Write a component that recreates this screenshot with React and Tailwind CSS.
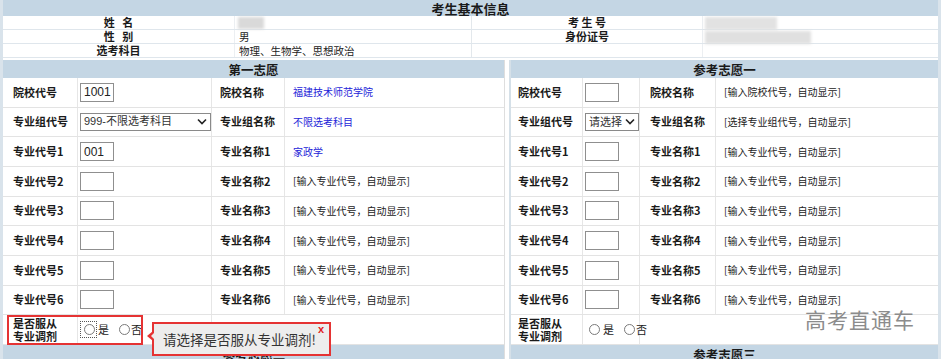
import React from "react";

const FONT = "font-['SimSun','Noto_Sans_CJK_SC',sans-serif]";

function Chevron() {
  return (
    <svg width="10" height="7" viewBox="0 0 10 7" className="shrink-0">
      <polyline points="1,1.5 5,5.5 9,1.5" fill="none" stroke="#222" strokeWidth="1.6" />
    </svg>
  );
}

function TextInput({ value }) {
  return (
    <div className="w-[34px] h-[19px] border border-[#8f8f8f] bg-white flex items-center pl-[3px] text-[12px] leading-[14px] text-[#222] font-['Liberation_Sans',sans-serif]">
      {value}
    </div>
  );
}

function Radios({ focus }) {
  return (
    <div className="flex items-center text-[11px] leading-[13px] text-[#222]">
      <div className={`flex items-center h-[17px] pl-[3px] pr-[1px] ${focus ? "border border-dotted border-[#555]" : "border border-transparent"}`}>
        <span className="w-[11px] h-[11px] rounded-full border border-[#7a7a7a] bg-white" />
      </div>
      <span className="ml-[1px]">是</span>
      <span className="ml-[10px] w-[11px] h-[11px] rounded-full border border-[#7a7a7a] bg-white" />
      <span className="ml-[1px]">否</span>
    </div>
  );
}

function PanelRow({ cols, pads, label, input, label2, value, blue }) {
  return (
    <div className="flex h-[29.67px] border-b border-[#e3e3e3]">
      <div className={`${cols[0]} ${pads[0]} border-r border-[#e6e6e6] flex items-center text-[11px] font-bold text-[#1a1a1a] leading-[13px]`}>
        {label}
      </div>
      <div className={`${cols[1]} ${pads[1]} border-r border-[#e6e6e6] flex items-center`}>{input}</div>
      {label2 !== undefined ? (
        <>
          <div className={`${cols[2]} ${pads[2]} border-r border-[#e6e6e6] flex items-center text-[11px] leading-[13px] font-bold text-[#1a1a1a]`}>
            {label2}
          </div>
          <div className={`flex-1 pl-[8px] flex items-center text-[10px] leading-[12px] ${blue ? "text-[#2424d8]" : "text-[#222]"}`}>
            {value}
          </div>
        </>
      ) : (
        <div className="flex-1" />
      )}
    </div>
  );
}

function Panel({ title, cols, pads, rows, radioFocus, className }) {
  return (
    <div className={className}>
      <div className="h-[18px] bg-[#c4d6e4] flex items-center justify-center text-[12.5px] leading-[15px] font-bold text-[#1a1a1a]">
        {title}
      </div>
      {rows.map((r, i) => (
        <PanelRow key={i} cols={cols} pads={pads} {...r} />
      ))}
      <PanelRow
        cols={cols}
        pads={pads}
        label={
          <div className="flex flex-col leading-[13px]">
            <span>是否服从</span>
            <span>专业调剂</span>
          </div>
        }
        input={<Radios focus={radioFocus} />}
      />
      <div className="h-[18px] bg-[#c4d6e4]" />
    </div>
  );
}

function SelectBox({ wide, text }) {
  return (
    <div
      className={`${wide ? "w-[131px]" : "w-[56px]"} h-[18px] border border-[#8a8a8a] bg-white flex items-center justify-between pl-[3px] pr-[3px] text-[11px] leading-[13px] text-[#333]`}
    >
      <span className={wide ? "font-['Liberation_Sans','Noto_Sans_CJK_SC',sans-serif]" : ""}>{text}</span>
      <Chevron />
    </div>
  );
}

function buildRows(left) {
  const auto = "[输入专业代号，自动显示]";
  const rows = [
    {
      label: "院校代号",
      input: <TextInput value={left ? "1001" : ""} />,
      label2: "院校名称",
      value: left ? "福建技术师范学院" : "[输入院校代号，自动显示]",
      blue: left,
    },
    {
      label: "专业组代号",
      input: <SelectBox wide={left} text={left ? "999-不限选考科目" : "请选择"} />,
      label2: "专业组名称",
      value: left ? "不限选考科目" : "[选择专业组代号，自动显示]",
      blue: left,
    },
  ];
  for (let i = 1; i <= 6; i++) {
    rows.push({
      label: `专业代号${i}`,
      input: <TextInput value={left && i === 1 ? "001" : ""} />,
      label2: `专业名称${i}`,
      value: left && i === 1 ? "家政学" : auto,
      blue: left && i === 1,
    });
  }
  return rows;
}

function Blur({ className }) {
  return <div className={`absolute blur-[1.5px] ${className}`} />;
}

export default function App() {
  return (
    <div className={`relative w-[941px] h-[359px] overflow-hidden bg-white border-l-[3px] border-r-[3px] border-[#d9e3eb] ${FONT}`}>
      {/* top section */}
      <div className="h-[16px] bg-[#c4d6e4] flex items-center justify-center text-[13px] leading-[15px] font-bold text-[#1a1a1a]">
        考生基本信息
      </div>
      <div className="relative">
        {[
          ["姓\u00a0\u00a0\u00a0名", "", "考\u00a0生\u00a0号", ""],
          ["性\u00a0\u00a0\u00a0别", "男", "身份证号", ""],
          ["选考科目", "物理、生物学、思想政治", "", ""],
        ].map((r, i) => (
          <div key={i} className="flex h-[14px] border-b border-[#dfe6ec] text-[11px] leading-[13px]">
            <div className="w-[232px] border-r border-[#eceff2] text-center font-bold text-[#1a1a1a]">{r[0]}</div>
            <div className="w-[237px] border-r border-[#e3e8ec] pl-[4px] text-[10.5px] text-[#222]">{r[1]}</div>
            <div className="w-[231px] border-r border-[#eceff2] text-center font-bold text-[#1a1a1a]">{r[2]}</div>
            <div className="flex-1" />
          </div>
        ))}
        <Blur className="left-[235px] top-[1px] w-[26px] h-[12px] bg-[#d9d9d9]" />
        <Blur className="left-[702px] top-[1px] w-[72px] h-[13px] bg-[#e2e2e2]" />
        <Blur className="left-[702px] top-[15px] w-[106px] h-[13px] bg-[#e0e0e0]" />
      </div>
      <div className="h-[2px]" />

      {/* panels */}
      <div className="flex">
        <Panel
          className="w-[502px] border-r border-[#dedede]"
          title="第一志愿"
          cols={["w-[75px]", "w-[134px]", "w-[73px]"]}
          pads={["pl-[10px]", "pl-[2px]", "pl-[8px]"]}
          rows={buildRows(true)}
          radioFocus
        />
        <div className="w-[4px]" />
        <Panel
          className="flex-1 border-l-[2px] border-[#d5e0e8]"
          title="参考志愿一"
          cols={["w-[72px]", "w-[57px]", "w-[76px]"]}
          pads={["pl-[7px]", "pl-[2px]", "pl-[10px]"]}
          rows={buildRows(false)}
        />
      </div>

      {/* bottom headers text (cut off by the window) */}
      <div className="absolute left-0 top-[347px] w-[935px] flex text-[12.5px] leading-[15px] font-bold text-[#1a1a1a]">
        <div className="w-[502px] text-center">参考志愿二</div>
        <div className="w-[6px]" />
        <div className="flex-1 text-center">参考志愿三</div>
      </div>

      {/* red highlight around the radio cell */}
      <div className="absolute left-[4px] top-[315px] w-[136px] h-[30px] border-2 border-[#e53333]" />

      {/* tooltip */}
      <div className="absolute left-[149px] top-[322px] w-[179px] h-[34px] border-2 border-[#e53333] bg-[#ededed] flex items-center pl-[9px] text-[13.5px] leading-[18px] text-[#333] font-['Noto_Sans_CJK_SC',sans-serif]">
        请选择是否服从专业调剂!
        <span className="absolute right-[5px] top-[-1px] text-[11px] leading-[13px] font-bold text-[#e02020] font-['Liberation_Sans',sans-serif]">x</span>
        <span className="absolute left-[-7px] top-[7px] w-0 h-0 border-y-[5px] border-y-transparent border-r-[6px] border-r-[#e53333]" />
        <span className="absolute left-[-3px] top-[9px] w-0 h-0 border-y-[3px] border-y-transparent border-r-[3px] border-r-[#ededed]" />
      </div>

      {/* watermark */}
      <div className="absolute left-[802px] top-[305px] text-[21px] tracking-[1px] text-[#8c8c8c] font-['Noto_Sans_CJK_SC',sans-serif] leading-[28px]">
        高考直通车
      </div>
    </div>
  );
}
